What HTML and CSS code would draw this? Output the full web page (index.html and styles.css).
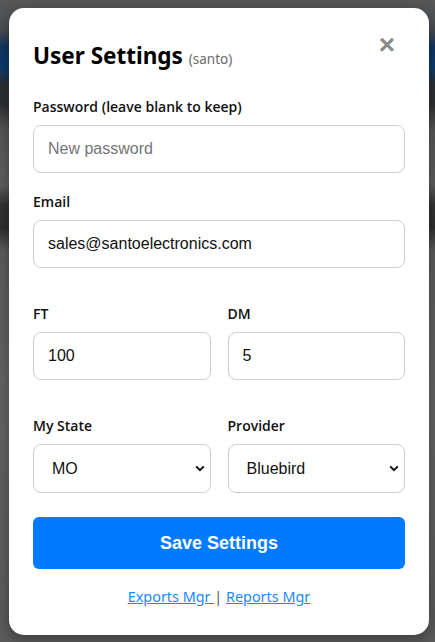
FILE: index.html
```html
<!DOCTYPE html>
<html lang="en">
<head>
<meta charset="utf-8">
<title>User Settings</title>
<link rel="stylesheet" href="styles.css">
</head>
<body>
<div class="backdrop">
  <div class="modal">
    <button class="close" type="button" aria-label="Close">&times;</button>
    <h2 class="title">User Settings <span class="user">(santo)</span></h2>

    <div class="field">
      <label class="label">Password (leave blank to keep)</label>
      <input class="control" type="password" placeholder="New password">
    </div>

    <div class="field">
      <label class="label">Email</label>
      <input class="control" type="text" value="sales@santoelectronics.com">
    </div>

    <div class="row">
      <div class="field">
        <label class="label">FT</label>
        <input class="control" type="text" value="100">
      </div>
      <div class="field">
        <label class="label">DM</label>
        <input class="control" type="text" value="5">
      </div>
    </div>

    <div class="row">
      <div class="field">
        <label class="label">My State</label>
        <div class="select-wrap">
          <select class="control select"><option>MO</option></select>
          <svg class="chev" width="10" height="7" viewBox="0 0 10 7"><path d="M1.2 1.4 L5 5.2 L8.8 1.4" fill="none" stroke="#111" stroke-width="2"/></svg>
        </div>
      </div>
      <div class="field">
        <label class="label">Provider</label>
        <div class="select-wrap">
          <select class="control select"><option>Bluebird</option></select>
          <svg class="chev" width="10" height="7" viewBox="0 0 10 7"><path d="M1.2 1.4 L5 5.2 L8.8 1.4" fill="none" stroke="#111" stroke-width="2"/></svg>
        </div>
      </div>
    </div>

    <button class="save" type="button">Save Settings</button>

    <p class="links"><a href="#">Exports Mgr </a><span class="sep">|</span> <a href="#">Reports Mgr</a></p>
  </div>
</div>
</body>
</html>
```

FILE: styles.css
```css
html, body {
  margin: 0;
  padding: 0;
}

body {
  width: 435px;
  height: 642px;
  overflow: hidden;
  font-family: "Noto Sans", "Open Sans", sans-serif;
  background:
    linear-gradient(180deg,
      #585858 0px,
      #4a4d52 30px,
      #0f3563 48px,
      #0d3a6c 68px,
      #2b2f35 84px,
      #2e2f31 104px,
      #575757 130px,
      #5e5e5e 185px,
      #333 205px,
      #2f2f2f 228px,
      #5b5b5b 250px,
      #646464 400px,
      #5a5a5a 642px);
}

.backdrop {
  padding: 8px 6px 7px 9px;
  box-sizing: border-box;
  height: 642px;
}

.modal {
  position: relative;
  height: 627px;
  box-sizing: border-box;
  background: #fff;
  border-radius: 15px;
  padding: 33px 24px 0 24px;
  box-shadow: 0 4px 14px rgba(0, 0, 0, 0.35);
  display: flex;
  flex-direction: column;
}

.close {
  position: absolute;
  top: 23px;
  right: 34px;
  border: 0;
  background: none;
  padding: 0;
  margin: 0;
  font-family: "Liberation Sans", Arial, sans-serif;
  font-size: 28px;
  font-weight: bold;
  line-height: 28px;
  color: #8a8a8a;
}

.title {
  margin: 0 0 23px 0;
  font-size: 22.5px;
  font-weight: 700;
  line-height: 30px;
  color: #000;
}

.user {
  font-size: 13.5px;
  font-weight: 400;
  color: #6c6c6c;
}

.field {
  display: flex;
  flex-direction: column;
  margin-bottom: 19px;
  min-width: 0;
}

.label {
  font-family: "Open Sans", "Noto Sans", sans-serif;
  font-size: 14px;
  font-weight: 600;
  line-height: 20px;
  color: #111;
  margin-bottom: 8px;
}

.control {
  box-sizing: border-box;
  width: 100%;
  height: 48px;
  border: 1px solid #cfcfcf;
  border-radius: 8px;
  padding: 0 14px;
  font-family: "Liberation Sans", Arial, sans-serif;
  font-size: 16px;
  color: #111;
  background: #fff;
  outline: none;
  margin: 0;
}

.control::placeholder {
  color: #757575;
}

.row {
  display: grid;
  grid-template-columns: 1fr 1fr;
  column-gap: 17px;
  margin-top: 17px;
}

.select-wrap {
  position: relative;
}

.select {
  height: 49px;
  appearance: none;
  -webkit-appearance: none;
  padding: 0 18px;
}

.chev {
  position: absolute;
  right: 6px;
  top: 21px;
  pointer-events: none;
}

.save {
  margin-top: 5px;
  height: 52px;
  width: 100%;
  border: 0;
  border-radius: 6px;
  background: #007bff;
  color: #fff;
  font-family: "Liberation Sans", Arial, sans-serif;
  font-size: 18px;
  font-weight: 700;
  padding: 0;
}

.links {
  margin: 18px 0 0 0;
  text-align: center;
  font-size: 14.4px;
  line-height: 20px;
  color: #444;
}

.links a {
  color: #1a88ff;
  text-decoration: underline;
}

.sep {
  color: #555;
}
```
